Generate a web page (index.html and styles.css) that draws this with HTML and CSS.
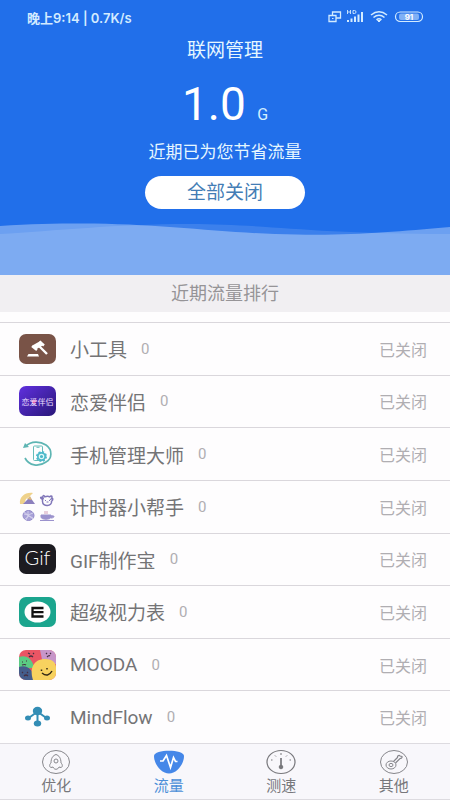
FILE: index.html
```html
<!DOCTYPE html>
<html lang="zh-CN">
<head>
<meta charset="utf-8">
<meta name="viewport" content="width=device-width, initial-scale=1">
<title>联网管理</title>
<link rel="stylesheet" href="styles.css">
</head>
<body>
<header class="hero">
  <div class="status">
    <span>晚上9:14 | 0.7K/s</span>
    <svg class="status-icons" width="96" height="14" viewBox="0 0 96 14" fill="none" stroke="#d3ebff">
      <path d="M1 5.500h7v6H1zM4.500 5V2h8v6H8.500" stroke-width="1.300"/>
      <path d="M4 8.500h1.500"/>
      <path d="M19.500 0v4M22.500 0v4M19.500 2h3M25 .5h1.500q1.500 0 1.500 1.500t-1.500 1.500H25z" stroke-width=".9"/>
      <path d="M20 12v-2M23.500 12V8.500M27 12V6.500M30.500 12V4.500M34 12V2" stroke-width="2"/>
      <path d="M43 5q8-6.500 16 0M45.500 7.500q5.500-4.500 11 0M48.500 9.800q2.500-2 5 0" stroke-width="1.600"/>
      <path d="M49.500 10.500h3L51 12z" fill="#d3ebff"/>
      <rect x="67.500" y="2" width="27" height="9.500" rx="4.700" stroke-width="1.200"/>
      <rect x="71" y="3.500" width="20" height="6.500" rx="2" fill="#7fb0f5" stroke="none"/>
      <text class="battery" x="81" y="10" text-anchor="middle">91</text>
    </svg>
  </div>
  <h1 class="title">联网管理</h1>
  <p class="amount">1.0 <span class="unit">G</span></p>
  <p class="saved">近期已为您节省流量</p>
  <button class="close-all" type="button">全部关闭</button>
  <svg class="wave" viewBox="0 0 450 53" preserveAspectRatio="none" fill="#fff">
    <path opacity=".34" d="M0 4C30 2 55 1.500 82 1.500C155 1.500 215 10 275 12C350 14.500 390 10 450 5V53H0z"/>
    <path opacity=".12" d="M0 12C55 9 115 2 190 2C265 2 310 12 450 12V53H0z"/>
  </svg>
</header>
<h2 class="rank-title">近期流量排行</h2>
<main class="list">
  <div class="row">
    <svg class="app" viewBox="0 0 37 30"><rect width="37" height="30" rx="7" fill="#795347"/><path fill="#fff" d="M9.500 20h9.500l1 2.500H8z"/><path d="M15 13.500L23 9" stroke="#fff" stroke-width="5"/><path d="M13 12l5 4M20.500 7.500l4.500 4M20 12l8 8" stroke="#fff" stroke-width="2.400"/></svg>
    <span class="name">小工具</span><span class="count">0</span><span class="state">已关闭</span>
  </div>
  <div class="row">
    <svg class="app" viewBox="0 0 37 30"><defs><linearGradient id="violet" x2="1" y2="1"><stop stop-color="#6030df"/><stop offset="1" stop-color="#291778"/></linearGradient></defs><rect width="37" height="30" rx="7" fill="url(#violet)"/><path d="M12 15l3-1.500 3 1.500-3 3z" fill="#ed5ba5"/><text class="love" x="18.500" y="18.500" text-anchor="middle">恋爱伴侣</text></svg>
    <span class="name">恋爱伴侣</span><span class="count">0</span><span class="state">已关闭</span>
  </div>
  <div class="row">
    <svg class="app" viewBox="0 0 37 30" fill="none"><path d="M7 7C12 2 21 2 27 6C34 11 33 20 27 23C20 28 10 27 6 19" stroke="#5eb5b3" stroke-width="1.700"/><path d="M4 9l2-5 4 4z" fill="#5eb5b3"/><rect x="14.500" y="7" width="9" height="14.500" rx="1" stroke="#66bdb9"/><path d="M17.500 8.300h3" stroke="#66bdb9"/><circle cx="22.500" cy="17.500" r="4.500" fill="#4eb9ca" stroke="#4eb9ca" stroke-width="2" stroke-dasharray="2 1.530"/><circle cx="22.500" cy="17.500" r="2.200" stroke="#dff7f7" stroke-width="1.200"/></svg>
    <span class="name">手机管理大师</span><span class="count">0</span><span class="state">已关闭</span>
  </div>
  <div class="row">
    <svg class="app" viewBox="0 0 37 30" fill="none"><path d="M1 12C0 5 6 0 14 1L11 4L7 7L5 12z" fill="#efd28b"/><path d="M4 12l7-7 5 7z" fill="#8c80bd"/><path d="M8 7l3-3 2 4z" fill="#ddb878"/><path d="M23.500 7.500c-3-2-2-3 .5-1.500-.8-3 1-3 1.800-1.200q3-1.200 5 0c2-2 3-.2 1.500 2 2-1 2 1 .2 2.500 1 5-9 6-9 .2z" stroke="#8177b9" stroke-width="1.500"/><path d="M26 8.500h1M30 8.500h1M27.500 10h2" stroke="#8177b9"/><ellipse cx="9.500" cy="23.500" rx="5.500" ry="5" fill="#a7a1d7" stroke="#9188c9"/><path d="M5 22l4 1 5-2M6 27l4-3 4 2M9 19v5l-2 4M5 20l9 7" stroke="#dad7f0" stroke-width=".8"/><path d="M22 23h10v2c0 3-10 3-10 0zM32 24c4-1 4 2 0 2M21 28.500h14" fill="#9b92cd" stroke="#9b92cd"/><path d="M26 22v-3M28 22v-3" stroke="#d2a0b9"/></svg>
    <span class="name">计时器小帮手</span><span class="count">0</span><span class="state">已关闭</span>
  </div>
  <div class="row">
    <svg class="app" viewBox="0 0 37 30"><rect width="37" height="30" rx="7" fill="#1c1b20"/><text class="gif" x="18.500" y="21" text-anchor="middle">Gif</text></svg>
    <span class="name">GIF制作宝</span><span class="count">0</span><span class="state">已关闭</span>
  </div>
  <div class="row">
    <svg class="app" viewBox="0 0 37 30"><rect width="37" height="30" rx="7" fill="#1ba58e"/><ellipse cx="18.500" cy="15" rx="13" ry="10.500" fill="#fff"/><path d="M24.500 11H13.500v8.500h11M13 15.200h11.500" fill="none" stroke="#111" stroke-width="2.300"/></svg>
    <span class="name">超级视力表</span><span class="count">0</span><span class="state">已关闭</span>
  </div>
  <div class="row">
    <svg class="app" viewBox="0 0 37 30" fill="none"><defs><clipPath id="tile"><rect width="37" height="30" rx="7"/></clipPath></defs><g clip-path="url(#tile)"><rect width="37" height="30" fill="#ea5564"/><path d="M21 0h16v14H24z" fill="#c796c9"/><path d="M0 7C7 4 14 9 15 18H0z" fill="#5bcb83"/><path d="M0 17C8 14 15 20 15 30H0z" fill="#445d8b"/><path d="M14 30C10 18 15 9 26 9C34 9 37 13 37 18V30z" fill="#f7d25f"/></g><path d="M9 3l2 1M14 3l1 1M10 7q2-2 4 0M3 12h1M7 11h1M3 15q3-1 4 0M27 3l1 1M31 3l1 1M28 7q2-2 3-1M3 22l1 1M8 22l1 1M5 26q2-2 4 0" stroke="#462f42" stroke-width="1.200"/><path d="M22.500 19.500v1.500M28 18v1.500M23 23q6 5 10-2" stroke="#332915" stroke-width="1.500"/></svg>
    <span class="name">MOODA</span><span class="count">0</span><span class="state">已关闭</span>
  </div>
  <div class="row">
    <svg class="app" viewBox="0 0 37 30" fill="#338db5"><path d="M18.500 9v14M18 10L9 16.500M19 10l9 6.500" stroke="#338db5" stroke-width="2"/><ellipse cx="18.500" cy="9" rx="4.700" ry="4.200"/><ellipse cx="9" cy="16" rx="3" ry="2.500"/><ellipse cx="28" cy="16" rx="3" ry="2.500"/><ellipse cx="18.500" cy="21.500" rx="3.700" ry="3"/></svg>
    <span class="name">MindFlow</span><span class="count">0</span><span class="state">已关闭</span>
  </div>
</main>
<nav class="tabs">
  <a class="tab" href="#optimize"><svg viewBox="0 0 32 26" fill="none" stroke="#86868b"><ellipse cx="16" cy="13" rx="13.500" ry="11.500"/><path d="M11 18.500C9 18 9.500 15 11 14C11 9 13 6.500 16 5.500C19 6.500 21 9 21 14C22.500 15 23 18 21 18.500L19 18C18 21 14 21 13 18z"/><circle cx="16" cy="12" r="2"/></svg>优化</a>
  <a class="tab tab-on" href="#traffic" aria-current="page"><svg viewBox="0 0 32 26" fill="none"><path d="M1 7C1 0 31 0 31 7C31 15 24 24.500 16 24.500S1 15 1 7z" fill="#4587e8"/><path d="M7 12h3l3.500-5.500 4 12 3-10 2 4h2" stroke="#fff" stroke-width="1.700"/></svg>流量</a>
  <a class="tab" href="#speed"><svg viewBox="0 0 32 26" fill="none" stroke="#77777b"><ellipse cx="16" cy="13" rx="14" ry="11.500" stroke-width="1.200"/><path d="M16 9v9" stroke-width="1.700"/><circle cx="16" cy="18" r="1.800" fill="#77777b"/><path d="M6 11h1.500M10 6.500l1 1M16 4v2M22 6.500l-1 1M26 11h-1.500"/></svg>测速</a>
  <a class="tab" href="#other"><svg viewBox="0 0 32 26" fill="none" stroke="#86868b"><ellipse cx="16" cy="13" rx="13.500" ry="11.500"/><ellipse cx="13" cy="16" rx="5" ry="4"/><ellipse cx="13" cy="16" rx="2" ry="1.600"/><path d="M15.500 12.500l4-4c-.5-2 2-2.500 2.500-1.500l2 .5c.5 1.500-1 2-2 2l-4.500 4.500" stroke-width="1.200"/></svg>其他</a>
</nav>
</body>
</html>
```

FILE: styles.css
```css
* { box-sizing: border-box; }

body {
  display: flex;
  flex-direction: column;
  min-height: 100vh;
  margin: 0;
  background: #fefdfe;
  color: #747476;
  font-family: Roboto, "Noto Sans CJK SC", sans-serif;
}

h1, h2, p { margin: 0; font-weight: 400; }

.hero {
  display: flex;
  flex-direction: column;
  align-items: center;
  background: #216fea;
  color: #e6f7ff;
}

.status {
  display: flex;
  align-items: center;
  justify-content: space-between;
  align-self: stretch;
  height: 34px;
  padding: 0 26px 0 27px;
  color: #d3ebff;
  font-family: Inter, "Noto Sans CJK SC", sans-serif;
  font-size: 13px;
  font-weight: 600;
}

.battery {
  fill: #fff;
  stroke: none;
  font-size: 8px;
  font-weight: 700;
}

.title {
  font-size: 19px;
  line-height: 34px;
}

.amount {
  color: #fff;
  font-size: 46px;
  line-height: 72px;
}

.unit {
  color: #d3f0ff;
  font-size: 16px;
  line-height: 16px;
}

.saved {
  font-size: 17px;
  line-height: 24px;
}

.close-all {
  width: 160px;
  height: 33px;
  margin: 12px 0 13px;
  padding: 0;
  border: 0;
  border-radius: 17px;
  background: #fff;
  color: #447db5;
  font: inherit;
  font-size: 19px;
  line-height: 33px;
}

.wave {
  display: block;
  width: 100%;
  height: 53px;
}

.rank-title {
  margin-bottom: 10px;
  background: #f1eff2;
  color: #969497;
  font-size: 18px;
  line-height: 37px;
  text-align: center;
}

.list {
  display: grid;
  flex: 1;
  grid-auto-rows: 1fr;
}

.row {
  display: flex;
  align-items: center;
  padding: 0 23px 0 19px;
  border-top: 1px solid #dad7dc;
}

.app {
  width: 37px;
  height: 30px;
}

.name {
  margin-left: 14px;
  font-size: 19px;
}

.count {
  margin-left: 14px;
  color: #b0aeb2;
  font-size: 15px;
}

.state {
  margin-left: auto;
  color: #b0aeb2;
  font-size: 16px;
}

.love {
  fill: #e8dcff;
  font-size: 8px;
}

.gif {
  fill: #fff;
  font-family: Lato, sans-serif;
  font-size: 20px;
  font-weight: 300;
}

.tabs {
  display: grid;
  grid-template-columns: repeat(4, 1fr);
  border-top: 1px solid #dddbe0;
  border-bottom: 1px solid #dddbe0;
  background: #f8f7fb;
}

.tab {
  display: flex;
  flex-direction: column;
  align-items: center;
  padding: 5px 0 2px;
  color: #77777b;
  font-size: 15px;
  line-height: 22px;
  text-decoration: none;
}

.tab svg {
  width: 32px;
  height: 26px;
}

.tab-on { color: #4c8fd8; }
```
